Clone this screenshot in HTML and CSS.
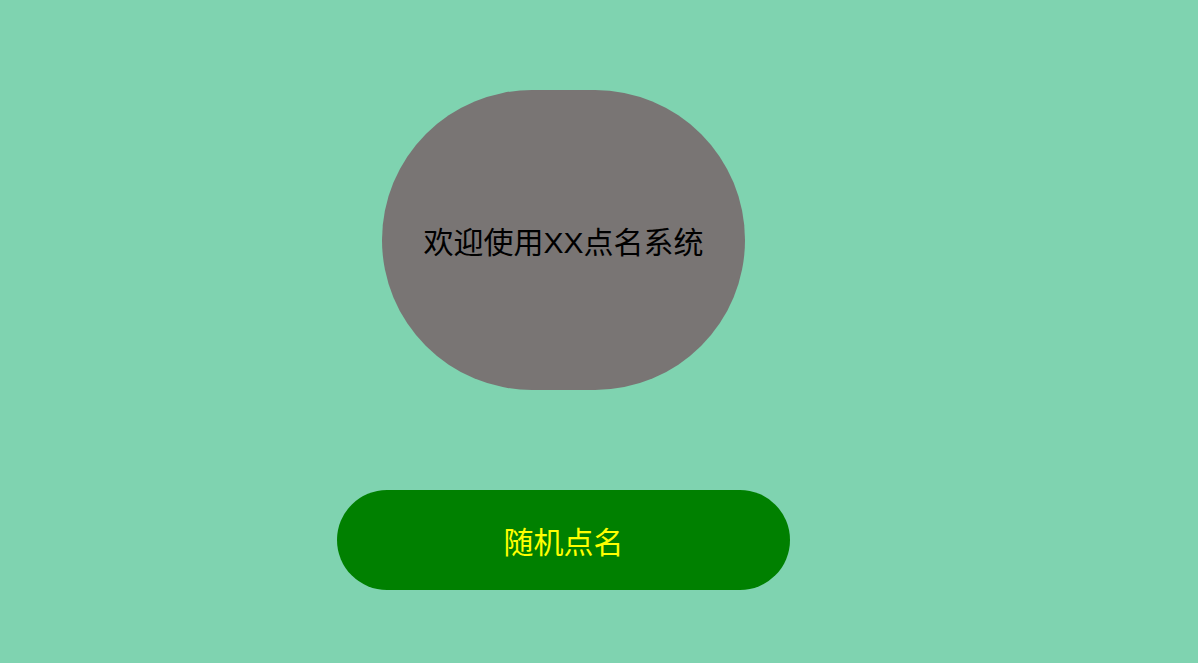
FILE: index.html
```html
<!DOCTYPE html>
<html lang="zh-CN">
<head>
<meta charset="utf-8">
<title>点名系统</title>
<link rel="stylesheet" href="styles.css">
</head>
<body>
<main class="stage">
  <div class="welcome">欢迎使用XX点名系统</div>
  <button class="pick">随机点名</button>
</main>
</body>
</html>
```

FILE: styles.css
```css
html, body {
  margin: 0;
  padding: 0;
  height: 100%;
}
body {
  background: #7fd3b0;
  font-family: "Liberation Sans", "Noto Sans CJK SC", sans-serif;
  overflow: hidden;
}
.stage {
  width: 1127px;
  display: flex;
  flex-direction: column;
  align-items: center;
  padding-top: 90px;
}
.welcome {
  width: 363px;
  height: 300px;
  border-radius: 150px;
  background: #797574;
  color: #000;
  font-size: 30px;
  display: flex;
  align-items: center;
  justify-content: center;
}
.pick {
  margin-top: 100px;
  width: 453px;
  height: 100px;
  border: none;
  border-radius: 50px;
  background: #008000;
  color: #ffff00;
  font-family: "Noto Sans CJK SC", sans-serif;
  font-size: 30px;
  padding: 0;
}
```
